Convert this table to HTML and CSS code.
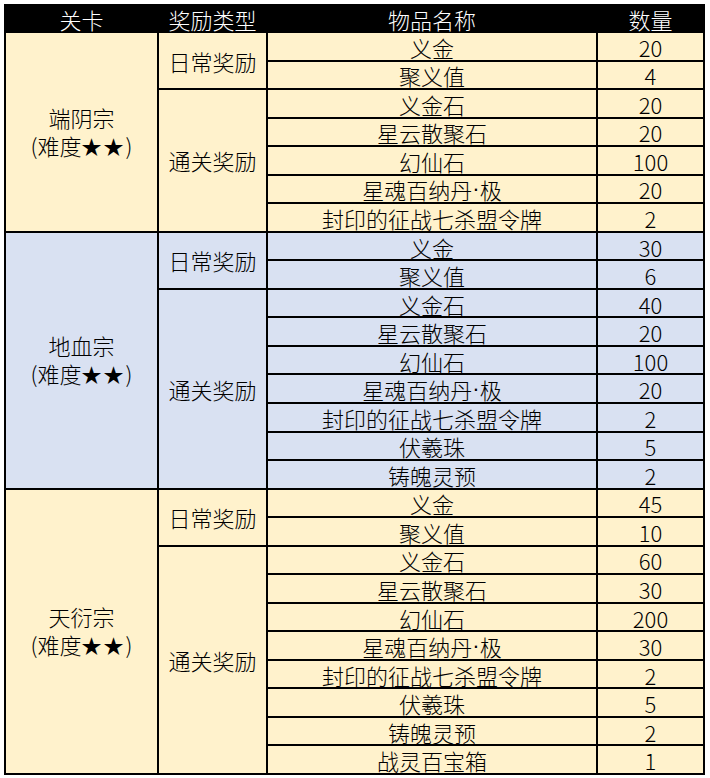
FILE: index.html
```html
<!DOCTYPE html>
<html lang="zh">
<head>
<meta charset="utf-8">
<link rel="stylesheet" href="styles.css">
</head>
<body>
<div class="sheet" role="table">
  <div class="cell head c1">关卡</div>
  <div class="cell head c2">奖励类型</div>
  <div class="cell head c3">物品名称</div>
  <div class="cell head c4">数量</div>

  <div class="cell gold c1 stage span7"><span>端阴宗<br>(难度<span class="stars">★★</span>)</span></div>
  <div class="cell gold c2 span2">日常奖励</div>
  <div class="cell gold c3">义金</div><div class="cell gold c4">20</div>
  <div class="cell gold c3">聚义值</div><div class="cell gold c4">4</div>
  <div class="cell gold c2 span5">通关奖励</div>
  <div class="cell gold c3">义金石</div><div class="cell gold c4">20</div>
  <div class="cell gold c3">星云散聚石</div><div class="cell gold c4">20</div>
  <div class="cell gold c3">幻仙石</div><div class="cell gold c4">100</div>
  <div class="cell gold c3">星魂百纳丹<span class="dot">·</span>极</div><div class="cell gold c4">20</div>
  <div class="cell gold c3">封印的征战七杀盟令牌</div><div class="cell gold c4">2</div>

  <div class="cell blue c1 stage span9"><span>地血宗<br>(难度<span class="stars">★★</span>)</span></div>
  <div class="cell blue c2 span2">日常奖励</div>
  <div class="cell blue c3">义金</div><div class="cell blue c4">30</div>
  <div class="cell blue c3">聚义值</div><div class="cell blue c4">6</div>
  <div class="cell blue c2 span7">通关奖励</div>
  <div class="cell blue c3">义金石</div><div class="cell blue c4">40</div>
  <div class="cell blue c3">星云散聚石</div><div class="cell blue c4">20</div>
  <div class="cell blue c3">幻仙石</div><div class="cell blue c4">100</div>
  <div class="cell blue c3">星魂百纳丹<span class="dot">·</span>极</div><div class="cell blue c4">20</div>
  <div class="cell blue c3">封印的征战七杀盟令牌</div><div class="cell blue c4">2</div>
  <div class="cell blue c3">伏羲珠</div><div class="cell blue c4">5</div>
  <div class="cell blue c3">铸魄灵预</div><div class="cell blue c4">2</div>

  <div class="cell gold c1 stage span10"><span>天衍宗<br>(难度<span class="stars">★★</span>)</span></div>
  <div class="cell gold c2 span2">日常奖励</div>
  <div class="cell gold c3">义金</div><div class="cell gold c4">45</div>
  <div class="cell gold c3">聚义值</div><div class="cell gold c4">10</div>
  <div class="cell gold c2 span8">通关奖励</div>
  <div class="cell gold c3">义金石</div><div class="cell gold c4">60</div>
  <div class="cell gold c3">星云散聚石</div><div class="cell gold c4">30</div>
  <div class="cell gold c3">幻仙石</div><div class="cell gold c4">200</div>
  <div class="cell gold c3">星魂百纳丹<span class="dot">·</span>极</div><div class="cell gold c4">30</div>
  <div class="cell gold c3">封印的征战七杀盟令牌</div><div class="cell gold c4">2</div>
  <div class="cell gold c3">伏羲珠</div><div class="cell gold c4">5</div>
  <div class="cell gold c3">铸魄灵预</div><div class="cell gold c4">2</div>
  <div class="cell gold c3">战灵百宝箱</div><div class="cell gold c4">1</div>
</div>
</body>
</html>
```

FILE: styles.css
```css
html, body {
  margin: 0;
  padding: 0;
  background: #fff;
}
body {
  padding: 4px;
  font-family: "Noto Sans CJK SC", sans-serif;
  font-size: 22px;
  font-weight: 300;
  color: #000;
}
.sheet {
  box-sizing: border-box;
  width: 701px;
  height: 771px;
  padding: 2px;
  background: #000;
  display: grid;
  grid-template-columns: 151px 107px 328px 105px;
  grid-template-rows: 25px repeat(26, 1fr);
  gap: 2px;
  grid-auto-flow: row;
}
.cell {
  display: flex;
  align-items: center;
  justify-content: center;
  text-align: center;
  line-height: 1;
  white-space: nowrap;
  padding-top: 1px;
  box-sizing: border-box;
  overflow: visible;
}
.c1 { grid-column: 1; }
.c2 { grid-column: 2; }
.c3 { grid-column: 3; }
.c4 { grid-column: 4; }
.span2 { grid-row: span 2; }
.span5 { grid-row: span 5; }
.span7 { grid-row: span 7; }
.span8 { grid-row: span 8; }
.span9 { grid-row: span 9; }
.span10 { grid-row: span 10; }

.head {
  background: #000;
  color: #fff;
  padding-top: 0;
}
.gold { background: #fff2cc; }
.blue { background: #d9e1f2; }
.c2 { padding-top: 0; }
.stage {
  line-height: 28px;
  padding-top: 0;
}
.stars {
  font-size: 20px;
  letter-spacing: 2px;
}
.dot {
  font-family: "Liberation Sans", sans-serif;
}
```
